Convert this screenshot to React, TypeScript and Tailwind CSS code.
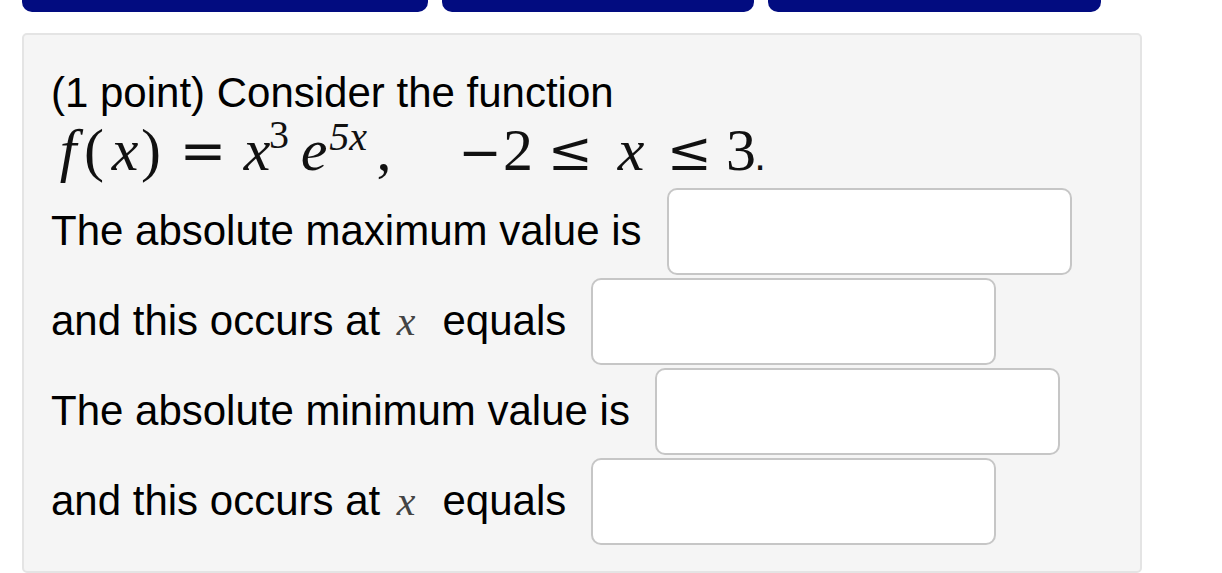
const sans = "font-['Liberation_Sans',Arial,Helvetica,sans-serif]";

type Tok = { t: string; ml: string; cls?: string };

// math tokens, each centred in a narrow box so the glyph centres land where the typeset ones do
const mathToks: Tok[] = [
  { t: "f", ml: "ml-[12px]", cls: "italic" },
  { t: "(", ml: "ml-[16px]" },
  { t: "x", ml: "ml-[21px]", cls: "italic" },
  { t: ")", ml: "ml-[16px]" },
  { t: "=", ml: "ml-[42px]", cls: "font-['DejaVu_Serif',serif] text-[56px]" },
  { t: "x", ml: "ml-[44px]", cls: "italic" },
  { t: "3", ml: "ml-[12px]", cls: "text-[40px] leading-[30px] -translate-y-[22px]" },
  { t: "e", ml: "ml-[25px]", cls: "italic" },
  { t: "5x", ml: "ml-[24px]", cls: "text-[40px] leading-[30px] -translate-y-[20px] italic" },
  { t: ",", ml: "ml-[26px]" },
  { t: "\u2212", ml: "ml-[86px]", cls: "font-['DejaVu_Serif',serif] text-[52px]" },
  { t: "2", ml: "ml-[28px]" },
  { t: "\u2264", ml: "ml-[42px]", cls: "font-['DejaVu_Serif',serif] text-[54px]" },
  { t: "x", ml: "ml-[51px]", cls: "italic" },
  { t: "\u2264", ml: "ml-[48px]", cls: "font-['DejaVu_Serif',serif] text-[54px]" },
  { t: "3", ml: "ml-[42px]" },
  { t: ".", ml: "ml-[9px]", cls: sans + " text-[42px]" },
];

function MathX() {
  return (
    <span className="inline-block w-[39px] pl-[5px] font-['Liberation_Serif','Times_New_Roman',serif] italic text-[#444]">
      x
    </span>
  );
}

function AnswerRow({ label }: { label: React.ReactNode }) {
  return (
    <div className="flex h-[90px] items-center gap-[25px]">
      <div className="leading-[48px] whitespace-nowrap">{label}</div>
      <div className="h-[87px] w-[405px] rounded-[10px] border-2 border-[#c6c6c6] bg-white" />
    </div>
  );
}

export default function App() {
  return (
    <div className={`min-h-screen bg-white text-black ${sans}`}>
      {/* nav buttons cut off at the top */}
      <div className="flex gap-[14px] pl-[22px]">
        <div className="h-[12px] w-[406px] rounded-b-[10px] bg-[#020c80]" />
        <div className="h-[12px] w-[312px] rounded-b-[10px] bg-[#020c80]" />
        <div className="h-[12px] w-[333px] rounded-b-[10px] bg-[#020c80]" />
      </div>

      {/* problem panel */}
      <div className="ml-[22px] mt-[21px] w-[1120px] rounded-[5px] border-2 border-[#e4e4e4] bg-[#f5f5f5] pl-[27px] pt-[34px] pb-[25px] text-[42px]">
        <div className="leading-[48px]">(1 point) Consider the function</div>

        <div className="mt-[5px] flex h-[64px] items-baseline font-['Liberation_Serif','Times_New_Roman',serif] text-[60px] leading-[56px] text-[#111]">
          {mathToks.map((tok, i) => (
            <span key={i} className={`flex w-[10px] justify-center whitespace-nowrap ${tok.ml} ${tok.cls ?? ""}`}>
              {tok.t}
            </span>
          ))}
        </div>

        <AnswerRow label="The absolute maximum value is" />
        <AnswerRow
          label={
            <>
              and this occurs at <MathX /> equals
            </>
          }
        />
        <AnswerRow label="The absolute minimum value is" />
        <AnswerRow
          label={
            <>
              and this occurs at <MathX /> equals
            </>
          }
        />
      </div>
    </div>
  );
}
